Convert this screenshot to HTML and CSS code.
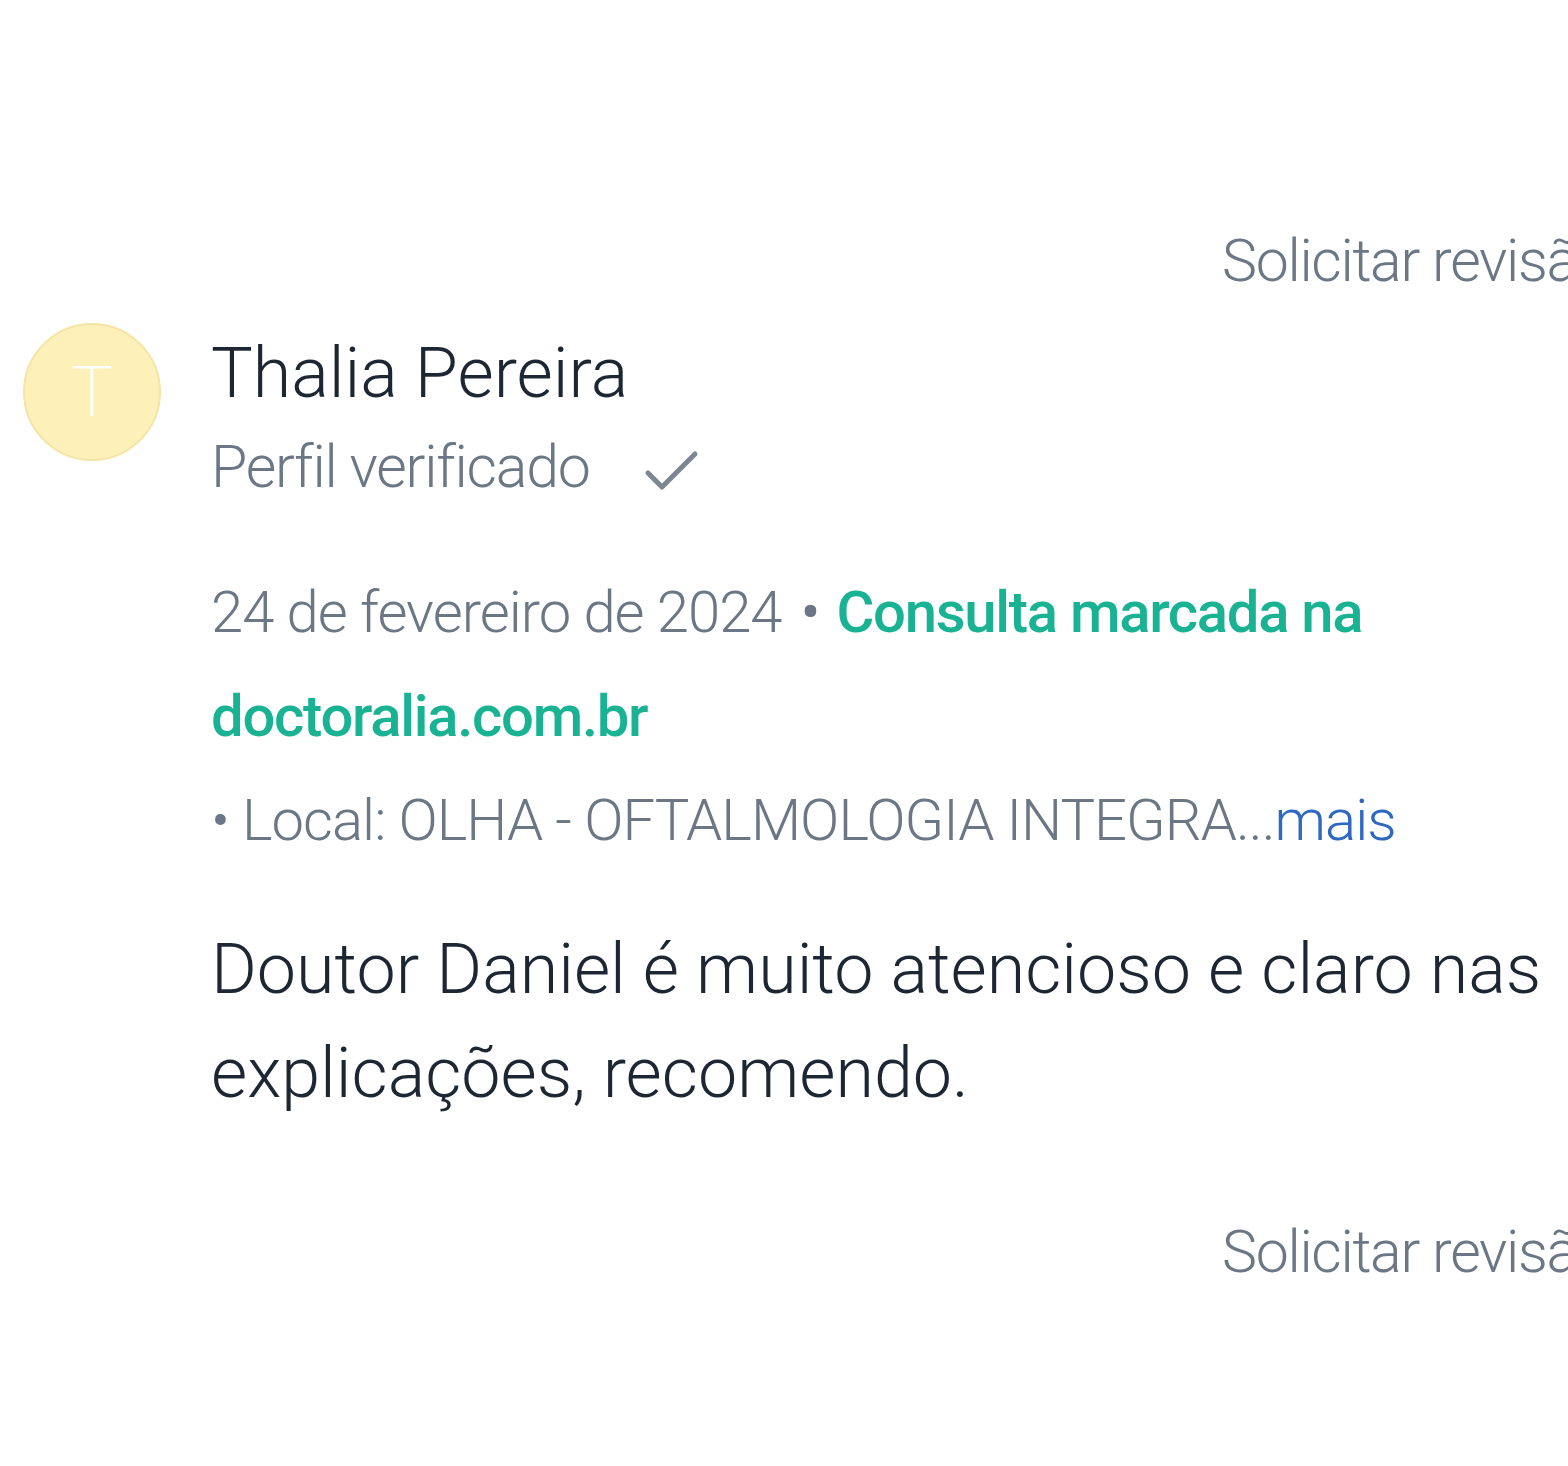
FILE: index.html
```html
<!DOCTYPE html>
<html lang="pt-BR">
<head>
<meta charset="utf-8">
<title>Opinião</title>
<link rel="stylesheet" href="styles.css">
</head>
<body>
<div class="review">
  <div class="report top"><span>Solicitar revisão</span></div>
  <div class="header">
    <div class="avatar"><span>T</span></div>
    <div class="who">
      <div class="name">Thalia Pereira</div>
      <div class="verified">
        <span>Perfil verificado</span>
        <svg class="check" viewBox="0 0 56 42" width="56" height="42" aria-hidden="true">
          <path d="M4 23 L18 37 L51 4" fill="none" stroke="#7d8792" stroke-width="5" stroke-linecap="round" stroke-linejoin="round"/>
        </svg>
      </div>
    </div>
  </div>
  <div class="body">
    <div class="meta">
      <span class="date">24 de fevereiro de 2024</span> <span class="dot">•</span> <span class="booked">Consulta marcada na doctoralia.com.br</span>
    </div>
    <div class="place">• Local: OLHA - OFTALMOLOGIA INTEGRA...<a class="more" href="#">mais</a></div>
    <p class="text">Doutor Daniel é muito atencioso e claro nas explicações, recomendo.</p>
  </div>
  <div class="report bottom"><span>Solicitar revisão</span></div>
</div>
</body>
</html>
```

FILE: styles.css
```css
html, body {
  margin: 0;
  padding: 0;
  background: #ffffff;
  overflow: hidden;
}

body {
  width: 1568px;
  height: 1466px;
  font-family: Roboto, "Noto Sans", "Liberation Sans", sans-serif;
  color: #6b7785;
}

.review {
  padding-top: 226px;
}

.report {
  padding-left: 1222px;
  font-size: 59px;
  line-height: 1.2;
  font-weight: 300;
  letter-spacing: -0.022em;
  white-space: nowrap;
  color: #6b7785;
}

.report.bottom {
  margin-top: 92px;
}

.header {
  display: flex;
  align-items: flex-start;
  gap: 50px;
  margin-top: 31px;
  padding-left: 23px;
}

.avatar {
  flex: none;
  width: 138px;
  height: 138px;
  margin-top: -5px;
  border-radius: 50%;
  background: #fdf0b9;
  box-sizing: border-box;
  border: 2px solid #f4e4a6;
  display: flex;
  align-items: center;
  justify-content: center;
  color: #ffffff;
  font-size: 70px;
  font-weight: 200;
}

.who {
  display: flex;
  flex-direction: column;
}

.name {
  font-size: 70px;
  line-height: 84px;
  margin-top: 3px;
  font-weight: 300;
  color: #1d2733;
}

.verified {
  display: flex;
  align-items: center;
  gap: 54px;
  margin-top: 16px;
  font-size: 59px;
  line-height: 72px;
  font-weight: 300;
  letter-spacing: -0.021em;
  color: #6b7785;
}

.check {
  margin-top: 8px;
}

.body {
  padding-left: 211px;
  padding-right: 20px;
}

.meta, .place {
  font-size: 58px;
  line-height: 104px;
  font-weight: 300;
  letter-spacing: -0.017em;
}

.meta {
  margin-top: 57px;
  width: 1210px;
}

.booked {
  color: #19b293;
  font-weight: 500;
  letter-spacing: -0.022em;
}

.dot {
  display: inline-block;
  margin: 0 4px 0 6px;
  color: #6b7785;
  font-weight: 400;
}

.more {
  color: #2e68c0;
  text-decoration: none;
}

.text {
  margin: 45px 0 0;
  font-size: 70px;
  line-height: 104px;
  font-weight: 300;
  color: #1d2733;
}
```
